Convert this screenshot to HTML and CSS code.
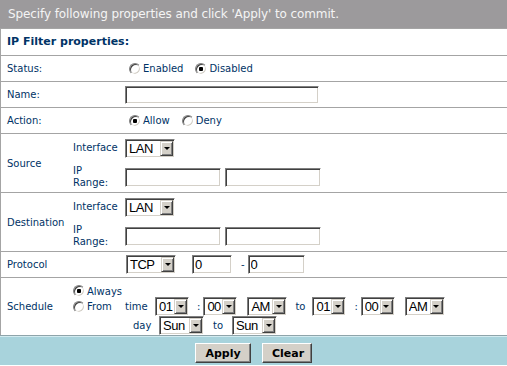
FILE: index.html
```html
<!DOCTYPE html>
<html lang="en">
<head>
    <meta charset="UTF-8">
    <meta name="viewport" content="width=device-width, initial-scale=1.0">
    <title>IP Filter</title>
    <link rel="stylesheet" href="styles.css">
</head>
<body>
    <div class="banner">Specify following properties and click 'Apply' to commit.</div>

    <div class="form">
        <div class="row title">IP Filter properties:</div>

        <div class="row">
            <div class="lbl wide">Status:</div>
            <div class="ctl">
                <label class="opt"><input type="radio" name="status">Enabled</label>
                <label class="opt"><input type="radio" name="status" checked>Disabled</label>
            </div>
        </div>

        <div class="row">
            <div class="lbl wide">Name:</div>
            <div class="ctl"><input type="text" class="txt name"></div>
        </div>

        <div class="row">
            <div class="lbl wide">Action:</div>
            <div class="ctl">
                <label class="opt"><input type="radio" name="action" checked>Allow</label>
                <label class="opt"><input type="radio" name="action">Deny</label>
            </div>
        </div>

        <div class="row group">
            <div class="lbl span2">Source</div>
            <div class="sub">Interface</div>
            <div class="ctl">
                <span class="sel w50"><select><option>LAN</option><option>WAN</option></select><span class="arr"></span></span>
            </div>
            <div class="sub">IP<br>Range:</div>
            <div class="ctl pair">
                <input type="text" class="txt ip">
                <input type="text" class="txt ip">
            </div>
        </div>

        <div class="row group">
            <div class="lbl span2">Destination</div>
            <div class="sub">Interface</div>
            <div class="ctl">
                <span class="sel w50"><select><option>LAN</option><option>WAN</option></select><span class="arr"></span></span>
            </div>
            <div class="sub">IP<br>Range:</div>
            <div class="ctl pair">
                <input type="text" class="txt ip">
                <input type="text" class="txt ip">
            </div>
        </div>

        <div class="row">
            <div class="lbl wide">Protocol</div>
            <div class="ctl proto">
                <span class="sel w50"><select><option>TCP</option><option>UDP</option><option>ICMP</option></select><span class="arr"></span></span>
                <input type="text" class="txt port1" value="0">
                <span class="dash">-</span>
                <input type="text" class="txt port2" value="0">
            </div>
        </div>

        <div class="row sched">
            <div class="lbl span3">Schedule</div>
            <label class="opt always"><input type="radio" name="sched" checked>Always</label>
            <label class="opt from"><input type="radio" name="sched">From</label>
            <div class="line">
                <span class="when">time</span>
                <span class="sel w34"><select><option>01</option></select><span class="arr"></span></span>
                <span class="colon">:</span>
                <span class="sel w34"><select><option>00</option></select><span class="arr"></span></span>
                <span class="sel w40 ampm"><select><option>AM</option><option>PM</option></select><span class="arr"></span></span>
                <span class="to">to</span>
                <span class="sel w34"><select><option>01</option></select><span class="arr"></span></span>
                <span class="colon">:</span>
                <span class="sel w34"><select><option>00</option></select><span class="arr"></span></span>
                <span class="sel w40 ampm"><select><option>AM</option><option>PM</option></select><span class="arr"></span></span>
            </div>
            <div class="line">
                <span class="when day">day</span>
                <span class="sel w45"><select><option>Sun</option><option>Mon</option></select><span class="arr"></span></span>
                <span class="to wide-to">to</span>
                <span class="sel w45"><select><option>Sun</option><option>Mon</option></select><span class="arr"></span></span>
            </div>
        </div>
    </div>

    <div class="actions">
        <button class="btn apply">Apply</button>
        <button class="btn clear">Clear</button>
    </div>
</body>
</html>
```

FILE: styles.css
```css
body {
    margin: 0;
    background: #fff;
    font-family: "DejaVu Sans", Verdana, sans-serif;
    font-size: 10px;
    color: #003366;
}
.banner {
    height: 28px;
    line-height: 28px;
    padding-left: 8px;
    background: #9c9a9c;
    color: #f4f4f4;
    font-size: 12px;
    letter-spacing: -0.1px;
}
.form {
    border-left: 1px solid #a4a4a4;
    border-top: 1px solid #a4a4a4;
}
.row {
    display: grid;
    grid-template-columns: 65px 59px 1fr;
    align-items: center;
    height: 25px;
    border-bottom: 1px solid #a4a4a4;
}
.row.title {
    display: block;
    height: 26px;
    line-height: 26px;
    padding-left: 6px;
    font-size: 11px;
    font-weight: bold;
}
.lbl {
    padding-left: 6px;
}
.lbl.wide {
    grid-column: 1 / 3;
}
.lbl.span2 {
    grid-row: 1 / 3;
}
.lbl.span3 {
    grid-row: 1 / 4;
}
.sub {
    padding-left: 7px;
    line-height: 12px;
}
.ctl {
    display: flex;
    align-items: center;
}
.row.group {
    height: 58px;
    grid-template-rows: 28px 30px;
}
.pair {
    gap: 4px;
}
.opt {
    display: inline-flex;
    align-items: center;
    gap: 2px;
    margin-right: 12px;
}
.ctl .opt:first-child {
    margin-left: 4px;
}
input[type=radio] {
    appearance: none;
    width: 12px;
    height: 12px;
    margin: 0;
    border-radius: 50%;
    border: 1px solid;
    border-color: #808080 #fff #fff #808080;
    box-shadow: inset 1px 1px #404040, inset -1px -1px #d4d0c8;
    background: #fff;
}
input[type=radio]:checked {
    background: radial-gradient(circle, #000 0 2px, #fff 2.5px);
}
.txt {
    box-sizing: border-box;
    height: 19px;
    margin: 0;
    padding: 0 2px;
    border: 1px solid;
    border-color: #808080 #fff #fff #808080;
    box-shadow: inset 1px 1px #404040, inset -1px -1px #d4d0c8;
    font-family: "Liberation Sans", Arial, sans-serif;
    font-size: 13px;
    letter-spacing: -0.5px;
    color: #000;
}
.txt.name {
    width: 194px;
    height: 18px;
}
.txt.ip {
    width: 96px;
}
.sel {
    box-sizing: border-box;
    display: inline-flex;
    flex: none;
    height: 19px;
    padding: 1px;
    border: 1px solid;
    border-color: #808080 #fff #fff #808080;
    box-shadow: inset 1px 1px #404040, inset -1px -1px #d4d0c8;
    background: #fff;
}
.sel select {
    appearance: none;
    flex: 1 1 0;
    min-width: 0;
    height: 15px;
    margin: 0;
    padding: 0 0 0 2px;
    border: none;
    background: transparent;
    font-family: "Liberation Sans", Arial, sans-serif;
    font-size: 13px;
    letter-spacing: -0.5px;
    line-height: 15px;
    color: #000;
    outline: none;
}
.arr {
    box-sizing: border-box;
    flex: none;
    width: 13px;
    height: 15px;
    display: flex;
    align-items: center;
    justify-content: center;
    background: #d4d0c8;
    border: 1px solid;
    border-color: #d4d0c8 #404040 #404040 #d4d0c8;
    box-shadow: inset 1px 1px #fff, inset -1px -1px #808080;
}
.arr::after {
    content: "";
    border-left: 3px solid transparent;
    border-right: 3px solid transparent;
    border-top: 3px solid #000;
}
.w34 { width: 34px; }
.w40 { width: 40px; }
.w45 { width: 45px; }
.w50 { width: 50px; }
.proto .sel {
    margin-left: 1px;
}
.proto .port1 {
    width: 40px;
    margin-left: 16px;
}
.proto .dash {
    margin: 0 3px 0 9px;
}
.proto .port2 {
    width: 57px;
}
.row.sched {
    height: 57px;
    border-bottom: none;
    grid-template-rows: 19px 19px 19px;
}
.sched .opt {
    padding-left: 7px;
    margin: 0;
}
.sched .always {
    grid-column: 2 / 4;
    grid-row: 1;
    align-self: end;
}
.sched .from {
    grid-column: 2;
    grid-row: 2;
}
.line {
    grid-column: 3;
    display: flex;
    align-items: center;
}
.when {
    width: 30px;
}
.when.day {
    width: 26px;
    padding-left: 8px;
}
.colon {
    margin: 0 3px 0 8px;
}
.ampm {
    margin-left: 10px;
}
.to {
    margin: 0 7px 0 8px;
}
.to.wide-to {
    margin: 0 9px 0 9px;
}
.actions {
    display: flex;
    justify-content: center;
    gap: 11px;
    box-sizing: border-box;
    height: 30px;
    padding-top: 7px;
    border-top: 1px solid #8ea4aa;
    box-shadow: inset 0 1px #d2ebf0;
    background: #a8d3dc;
}
.btn {
    height: 20px;
    padding: 0 9px;
    margin: 0;
    border: 1px solid;
    border-color: #fff #404040 #404040 #fff;
    box-shadow: inset -1px -1px #808080;
    background: #d4d0c8;
    font-family: "DejaVu Sans", Verdana, sans-serif;
    font-size: 11px;
    font-weight: bold;
    color: #000;
}
.btn.apply { width: 56px; }
.btn.clear { width: 50px; }
```
